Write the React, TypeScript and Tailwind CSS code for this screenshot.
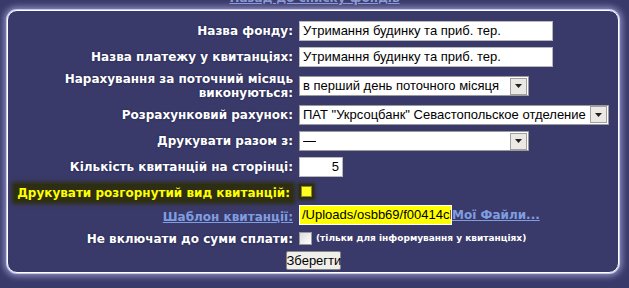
import React from "react";

const label = "font-['DejaVu_Sans',sans-serif] font-bold text-[12px] leading-[14px] text-white text-right [text-shadow:0_0_2px_#1c1c44]";
const field = "font-['Liberation_Sans',Arial,sans-serif] text-[13px] text-black";

function Arrow() {
  return (
    <span className="flex h-[17px] w-[17px] items-center justify-center border border-[#a0a0a0] bg-[#ece9e4]">
      <svg width="7" height="4" viewBox="0 0 7 4">
        <path d="M0 0h7L3.5 4z" fill="#222" />
      </svg>
    </span>
  );
}

function Select({ value, width }: { value: string; width: string }) {
  return (
    <div className={`flex h-[20px] items-center justify-between border border-[#9a9a9a] bg-white pl-[3px] pr-[1px] ${width}`}>
      <span className={`${field} whitespace-nowrap overflow-hidden`}>{value}</span>
      <Arrow />
    </div>
  );
}

function Row({ h, left, children }: { h: string; left: React.ReactNode; children: React.ReactNode }) {
  return (
    <div className={`grid grid-cols-[285px_1fr] gap-x-[6px] items-center ${h}`}>
      <div className={label}>{left}</div>
      <div className="flex items-center">{children}</div>
    </div>
  );
}

export default function App() {
  return (
    <div className="h-[288px] w-[629px] overflow-hidden bg-[#3a3a6a]">
      <div className="flex h-[10px] justify-center overflow-hidden">
        <a className="-mt-[9px] font-['DejaVu_Sans',sans-serif] text-[12px] font-bold leading-[14px] text-[#8a9ad8] underline">
          Назад до списку фондів
        </a>
      </div>

      <div className="ml-[7px] w-[612px] rounded-[10px] border border-white bg-[#3a3a6a] pt-[7px] shadow-[0_0_0_1px_#c8c8ea,0_0_6px_3px_#8e8ec4]">
        <Row h="h-[25px]" left="Назва фонду:">
          <div className={`h-[20px] w-[254px] border border-[#b8b8b8] bg-white pl-[3px] leading-[18px] ${field}`}>
            Утримання будинку та приб. тер.
          </div>
        </Row>
        <Row h="h-[28px]" left="Назва платежу у квитанціях:">
          <div className={`h-[20px] w-[254px] border border-[#b8b8b8] bg-white pl-[3px] leading-[18px] ${field}`}>
            Утримання будинку та приб. тер.
          </div>
        </Row>
        <Row
          h="h-[30px]"
          left={
            <>
              Нарахування за поточний місяць
              <br />
              виконуються:
            </>
          }
        >
          <Select value="в перший день поточного місяця" width="w-[230px]" />
        </Row>
        <Row h="h-[27px]" left="Розрахунковий рахунок:">
          <Select value={'ПАТ "Укрсоцбанк" Севастопольское отделение'} width="w-[310px]" />
        </Row>
        <Row h="h-[26px]" left="Друкувати разом з:">
          <Select value="—" width="w-[230px]" />
        </Row>
        <Row h="h-[25px]" left="Кількість квитанцій на сторінці:">
          <div className={`h-[20px] w-[44px] border border-[#b8b8b8] bg-white pr-[3px] text-right leading-[18px] ${field}`}>
            5
          </div>
        </Row>
        <div className="grid h-[23px] grid-cols-[285px_1fr] items-center gap-x-[6px]">
          <div className="text-right">
            <span className="bg-[#2e2e12] px-[3px] py-[2px] font-['DejaVu_Sans',sans-serif] text-[12px] font-bold leading-[14px] text-[#ffff00] shadow-[0_0_4px_2px_#2e2e12]">
              Друкувати розгорнутий вид квитанцій:
            </span>
          </div>
          <div className="flex items-center">
            <span className="flex h-[15px] w-[15px] items-center justify-center bg-[#2e2e12] shadow-[0_0_3px_1px_#2e2e12]">
              <span className="h-[11px] w-[11px] border border-[#8c8c20] bg-[#ffff20]" />
            </span>
          </div>
        </div>
        <div className="grid h-[25px] grid-cols-[285px_1fr] items-center gap-x-[6px]">
          <div className="text-right">
            <a className="font-['DejaVu_Sans',sans-serif] text-[12px] font-bold leading-[14px] text-[#7f9ee0] underline">
              Шаблон квитанції:
            </a>
          </div>
          <div className="flex items-center">
            <div className={`h-[20px] w-[153px] shrink-0 overflow-hidden whitespace-nowrap border border-white bg-[#ffff00] pl-[2px] leading-[18px] ${field}`}>
              /Uploads/osbb69/f00414cb.htm
            </div>
            <a className="font-['DejaVu_Sans',sans-serif] text-[12px] font-bold leading-[14px] text-[#7f9ee0] underline">
              Мої Файли...
            </a>
          </div>
        </div>
        <Row h="h-[23px]" left="Не включати до суми сплати:">
          <span className="mr-[4px] h-[13px] w-[13px] border border-[#9a9a9a] bg-gradient-to-br from-[#dcdcdc] to-white" />
          <span className="font-['DejaVu_Sans',sans-serif] text-[9px] font-bold text-white">
            (тільки для інформування у квитанціях)
          </span>
        </Row>
        <div className="flex h-[22px] items-start justify-center pt-[1px]">
          <button className={`h-[19px] w-[55px] rounded-[2px] border border-[#888] bg-[#f0f0ea] leading-[16px] ${field}`}>
            Зберегти
          </button>
        </div>
      </div>
    </div>
  );
}
